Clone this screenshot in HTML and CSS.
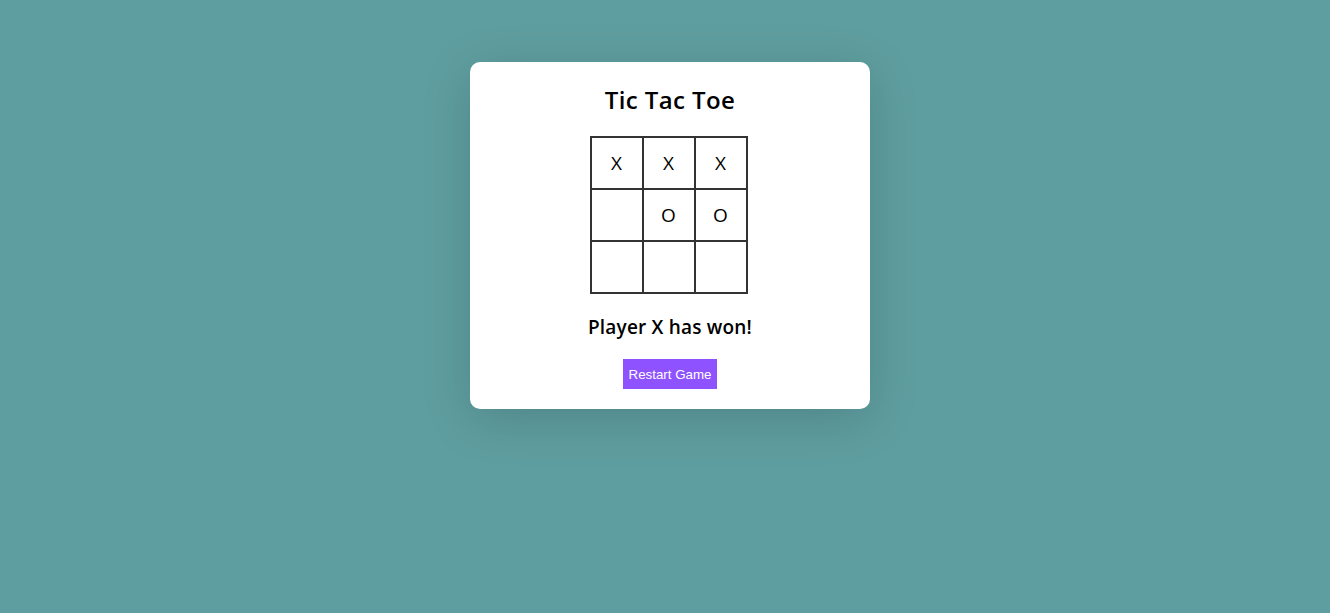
FILE: index.html
```html
<!DOCTYPE html>
<html lang="en">
<head>
<meta charset="utf-8">
<title>Tic Tac Toe</title>
<link rel="stylesheet" href="styles.css">
</head>
<body>
<main class="page">
  <section class="card">
    <h1 class="title">Tic Tac Toe</h1>
    <div class="board">
      <div class="cell">X</div>
      <div class="cell">X</div>
      <div class="cell">X</div>
      <div class="cell"></div>
      <div class="cell">O</div>
      <div class="cell">O</div>
      <div class="cell"></div>
      <div class="cell"></div>
      <div class="cell"></div>
    </div>
    <p class="status">Player X has won!</p>
    <button class="restart">Restart Game</button>
  </section>
</main>
</body>
</html>
```

FILE: styles.css
```css
html, body {
  margin: 0;
  padding: 0;
  height: 100%;
}
body {
  background: #5f9ea0;
  font-family: "Open Sans", "Noto Sans", sans-serif;
}
.page {
  display: flex;
  justify-content: center;
  padding: 62px 0 0 10px;
}
.card {
  width: 400px;
  box-sizing: border-box;
  background: #fff;
  border-radius: 10px;
  box-shadow: 0 10px 50px rgba(0, 0, 0, 0.16);
  padding: 20px 0 20px;
  display: flex;
  flex-direction: column;
  align-items: center;
  gap: 18px;
}
.title {
  margin: 0;
  font-family: "Open Sans", sans-serif;
  font-weight: 600;
  font-size: 24px;
  line-height: 36px;
  color: #000;
  letter-spacing: 0.4px;
}
.board {
  display: grid;
  grid-template-columns: repeat(3, 52px);
  grid-auto-rows: 52px;
  border-left: 2px solid #333;
  border-top: 2px solid #333;
  margin-right: 3px;
}
.cell {
  border-right: 2px solid #333;
  border-bottom: 2px solid #333;
  display: flex;
  align-items: center;
  justify-content: center;
  font-family: "Open Sans", sans-serif;
  font-size: 19px;
  color: #000;
}
.status {
  margin: 1px 0 0;
  font-family: "Open Sans", sans-serif;
  font-weight: 600;
  font-size: 19px;
  line-height: 28px;
  letter-spacing: 0.2px;
  color: #000;
}
.restart {
  border: none;
  background: #8f52ff;
  color: #fff;
  font-family: "Liberation Sans", Arial, sans-serif;
  font-size: 13.33px;
  height: 30px;
  padding: 0 6px;
  cursor: pointer;
}
```
